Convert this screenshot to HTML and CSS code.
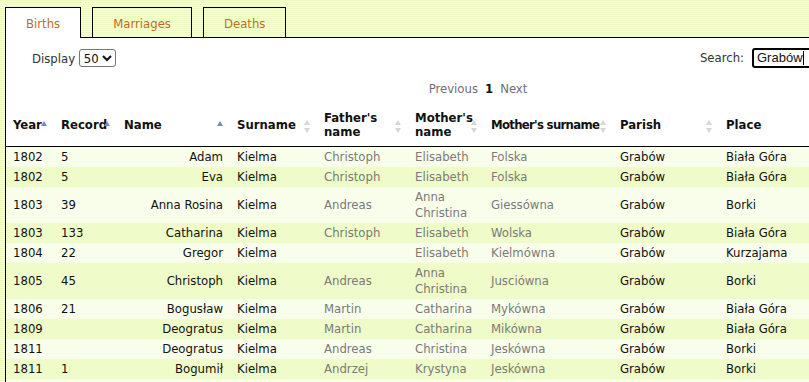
FILE: index.html
```html
<!DOCTYPE html>
<html lang="en">

<head>
    <meta charset="UTF-8">
    <meta name="viewport" content="width=device-width, initial-scale=1.0">
    <title>Births</title>
    <link rel="stylesheet" href="styles.css">
</head>

<body>
    <div class="page">
        <ul class="tabs">
            <li class="tab active">Births</li>
            <li class="tab">Marriages</li>
            <li class="tab">Deaths</li>
        </ul>

        <div class="panel">
            <div class="controls">
                <label class="length">Display
                    <select>
                        <option>50</option>
                    </select>
                </label>
                <label class="filter">Search:
                    <span class="search-box">Grabów<span class="caret"></span></span>
                </label>
            </div>

            <div class="paging">
                <span class="page-link">Previous</span>
                <span class="page-current">1</span>
                <span class="page-link">Next</span>
            </div>

            <table class="records">
                <colgroup>
                    <col style="width: 48px">
                    <col style="width: 63px">
                    <col style="width: 113px">
                    <col style="width: 87px">
                    <col style="width: 91px">
                    <col style="width: 76px">
                    <col style="width: 129px">
                    <col style="width: 106px">
                    <col>
                </colgroup>
                <thead>
                    <tr>
                        <th class="sort-asc">Year</th>
                        <th class="sort-asc">Record</th>
                        <th class="sort-asc">Name</th>
                        <th class="sort-both">Surname</th>
                        <th class="sort-both">Father's name</th>
                        <th class="sort-both">Mother's name</th>
                        <th class="sort-both nowrap">Mother's surname</th>
                        <th class="sort-both">Parish</th>
                        <th class="sort-both">Place</th>
                    </tr>
                </thead>
                <tbody id="rows"></tbody>
            </table>
        </div>
    </div>

    <script>
        // rows of the births register

        var births = [
            ["1802", "5", "Adam", "Kielma", "Christoph", "Elisabeth", "Folska", "Grabów", "Biała Góra"],
            ["1802", "5", "Eva", "Kielma", "Christoph", "Elisabeth", "Folska", "Grabów", "Biała Góra"],
            ["1803", "39", "Anna Rosina", "Kielma", "Andreas", "Anna Christina", "Giessówna", "Grabów", "Borki"],
            ["1803", "133", "Catharina", "Kielma", "Christoph", "Elisabeth", "Wolska", "Grabów", "Biała Góra"],
            ["1804", "22", "Gregor", "Kielma", "", "Elisabeth", "Kielmówna", "Grabów", "Kurzajama"],
            ["1805", "45", "Christoph", "Kielma", "Andreas", "Anna Christina", "Jusciówna", "Grabów", "Borki"],
            ["1806", "21", "Bogusław", "Kielma", "Martin", "Catharina", "Mykówna", "Grabów", "Biała Góra"],
            ["1809", "", "Deogratus", "Kielma", "Martin", "Catharina", "Mikówna", "Grabów", "Biała Góra"],
            ["1811", "", "Deogratus", "Kielma", "Andreas", "Christina", "Jeskówna", "Grabów", "Borki"],
            ["1811", "1", "Bogumił", "Kielma", "Andrzej", "Krystyna", "Jeskówna", "Grabów", "Borki"],
            ["", "", "", "", "", "", "", "", ""]
        ];

        var cls = ["", "", "name", "", "parent", "parent", "parent", "", ""];

        var add = "";
        for (var i = 0; i < births.length; i++) {
            add += `<tr class="${i % 2 ? "even" : "odd"}">`;
            for (var j = 0; j < births[i].length; j++) {
                add += `<td class="${cls[j]}">${births[i][j]}</td>`;
            }
            add += `</tr>`;
        }
        document.querySelector("#rows").innerHTML = add;
    </script>
</body>

</html>
```

FILE: styles.css
```css
* {
    padding: 0;
    margin: 0;
    box-sizing: border-box;
}

body {
    font-family: "DejaVu Sans Condensed", "Liberation Sans", sans-serif;
    font-size: 13px;
    line-height: 16px;
    color: #111;
    overflow: hidden;
    background: repeating-linear-gradient(#ecfac2 0 1px, #f8fde2 1px 2px);
}

.page {
    padding: 7px 0 0 5px;
    width: 950px;
}

.tabs {
    display: flex;
    gap: 11px;
    list-style: none;
    height: 30px;
}

.tab {
    position: relative;
    height: 31px;
    padding: 8px 20px 0;
    border: 1px solid #000;
    border-bottom: none;
    color: #c26b1f;
}

.tab.active {
    background-color: #fff;
    z-index: 1;
}

.panel {
    background-color: #fff;
    border-top: 1px solid #000;
    border-left: 1px solid #000;
    padding-top: 10px;
    height: 400px;
}

.controls {
    display: flex;
    justify-content: space-between;
    align-items: center;
    padding: 0 38px 0 26px;
    height: 19px;
    color: #333;
}

.length select {
    font-family: inherit;
    font-size: 13px;
    color: #111;
    height: 18px;
    border: 1px solid #767676;
    border-radius: 3px;
    background-color: #fff;
}

.filter {
    display: flex;
    align-items: center;
    gap: 8px;
}

.search-box {
    display: flex;
    align-items: center;
    width: 160px;
    height: 20px;
    padding: 0 3px;
    border: 2px solid #000;
    border-radius: 3px;
    color: #111;
    font-family: "Liberation Sans", sans-serif;
    font-size: 13px;
}

.caret {
    width: 1px;
    height: 14px;
    background-color: #000;
}

.paging {
    display: flex;
    justify-content: center;
    gap: 7px;
    margin-top: 14px;
    color: #6d6d7d;
}

.page-current {
    font-weight: bold;
    color: #111;
}

.records {
    margin-top: 6px;
    width: 100%;
    table-layout: fixed;
    border-collapse: collapse;
}

.records th {
    position: relative;
    padding: 8px 7px 7px;
    line-height: 14px;
    text-align: left;
    font-weight: bold;
    vertical-align: middle;
    border-bottom: 1px solid #000;
}

.records th.nowrap {
    white-space: nowrap;
    letter-spacing: -0.7px;
}

.records th::before,
.records th::after {
    content: "";
    position: absolute;
    right: 7px;
    border-left: 3px solid transparent;
    border-right: 3px solid transparent;
}

.sort-asc::before {
    top: 18px;
    border-bottom: 5px solid #7d83d6;
}

.sort-both::before {
    top: 17px;
    border-bottom: 5px solid #d6d6d6;
}

.sort-both::after {
    top: 25px;
    border-top: 5px solid #d6d6d6;
}

.records td {
    padding: 2px 7px;
    vertical-align: middle;
}

.records td.name {
    text-align: right;
}

.records td.parent {
    color: #7a7a7a;
}

.odd {
    background-color: #f9feea;
}

.even {
    background-color: #effbc8;
}
```
